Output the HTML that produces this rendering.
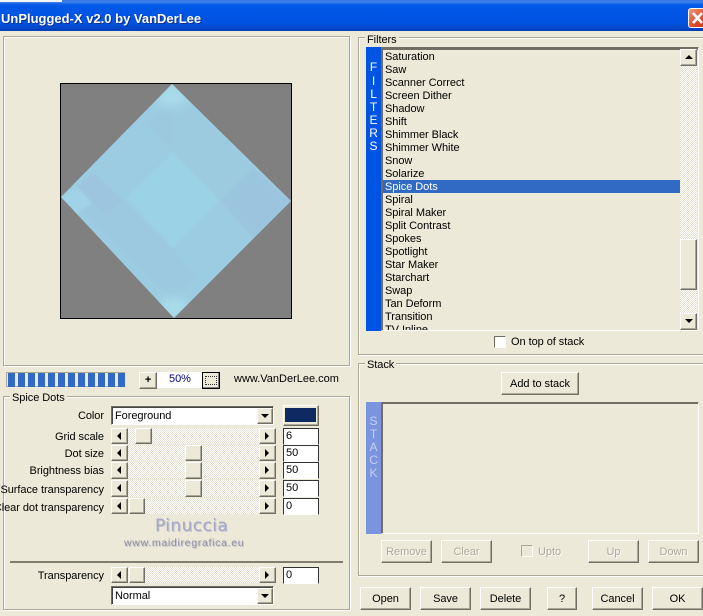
<!DOCTYPE html>
<html><head><meta charset="utf-8"><style>
html,body{margin:0;padding:0;background:#ece9d8}
#r{position:relative;width:703px;height:616px;overflow:hidden;background:#ece9d8;font-family:"Liberation Sans",sans-serif;font-size:11px;letter-spacing:-.05px;color:#000}
#r div{position:absolute;box-sizing:border-box;white-space:nowrap}
.t{line-height:13px}
.g{border:1px solid #aca899;box-shadow:inset 1px 1px 0 #fff,1px 1px 0 #fff}
.l{background:#ece9d8;padding:0 2px;height:13px;line-height:13px}
.b{background:#ece9d8;border:1px solid;border-color:#fff #716f64 #716f64 #fff;box-shadow:inset -1px -1px 0 #aca899;text-align:center}
.d{color:#aca899;text-shadow:1px 1px 0 #fff}
.tr{background:repeating-conic-gradient(#fff 0 25%,#e4e1d0 0 50%) 0 0/2px 2px}
.e{background:#fff;border:1px solid;border-color:#333 #333 #fff #333;box-shadow:inset 0 -1px 0 #fff;line-height:15px;padding-left:2px}
.c{background:#fff;border:1px solid;border-color:#716f64 #fff #fff #716f64;box-shadow:inset 1px 1px 0 #444;line-height:19px;padding-left:3px}
.rt{text-align:right;width:120px;line-height:13px}
.al,.ar,.au,.ad{width:0;height:0;border-style:solid;border-color:transparent}
.al{border-width:4px 4px 4px 0;border-right-color:#000}
.ar{border-width:4px 0 4px 4px;border-left-color:#000}
.au{border-width:0 4px 4px 4px;border-bottom-color:#000}
.ad{border-width:4px 4px 0 4px;border-top-color:#000}
.cell{background:#316ac5;width:7px;height:14px;top:373px}
.v{color:#fff;width:15px;text-align:center;font-size:12px;line-height:13px}
</style></head><body><div id="r">

<!-- top strip + titlebar -->
<div style="left:0;top:0;width:703px;height:3px;background:#3a7be8"></div>
<div style="left:0;top:0;width:62px;height:2px;background:#f4f4f4"></div>
<div style="left:0;top:3px;width:703px;height:28px;background:linear-gradient(#1f6ff0 0,#0058e6 8%,#0055e5 40%,#0054e3 70%,#0046c8 90%,#003fb8 100%)"></div>
<div style="left:1px;top:11px;font-weight:bold;font-size:13px;letter-spacing:0;line-height:16px;color:#fff;text-shadow:1px 1px 0 #0f2f90">UnPlugged-X v2.0 by VanDerLee</div>
<div style="left:688px;top:8px;width:20px;height:20px;background:linear-gradient(135deg,#f09a7c,#d8482a 60%,#c43a1a);border:1px solid #fff;border-radius:3px"></div>
<svg style="position:absolute;left:688px;top:8px" width="15" height="20"><path d="M5 5L14 15M14 5L5 15" stroke="#fff" stroke-width="2.6"/></svg>

<!-- left preview frame -->
<div class="g" style="left:3px;top:36px;width:347px;height:330px"></div>
<div style="left:60px;top:83px;width:232px;height:236px;background:#808080;border:1px solid #000"></div>
<svg style="position:absolute;left:0;top:0" width="360" height="330">
<defs>
<clipPath id="dm"><polygon points="172,84 291,201 174,318 61,197"/></clipPath>
<filter id="bl"><feGaussianBlur stdDeviation="1"/></filter>
<filter id="bl2"><feGaussianBlur stdDeviation="5"/></filter>
</defs>
<polygon points="172,84 291,201 174,318 61,197" fill="#9ccce2"/>
<g clip-path="url(#dm)">
<g filter="url(#bl)">
<polygon points="147,125 173,100 198,125 173,153" fill="#9cc9df"/>
<polygon points="93,172 173,248 147,275 67,197" fill="#9cc9e0"/>
<polygon points="220,201 253,168 173,90 173,153" fill="#9ccbe0"/>
<polygon points="173,153 220,201 173,248 127,198" fill="#9cd2e6"/>
<polygon points="253,168 290,201 253,238 220,201" fill="#9bc5de"/>
<polygon points="93,172 123,200 107,217 77,187" fill="#9dc5df"/>
<polygon points="173,248 198,277 173,298 147,275" fill="#9cc9df"/>
</g>
<g filter="url(#bl2)">
<polygon points="172,80 190,100 172,108 154,100" fill="#a9dcea"/>
<polygon points="174,322 192,304 174,296 156,304" fill="#a9dcea"/>
</g>
<polygon points="61,197 77,187 92,203 76,214" fill="#a0d2e8" filter="url(#bl)"/>
</g>
</svg>

<!-- progress -->
<div style="left:6px;top:372px;width:119px;height:15px;background:#ece9d8;border:1px solid #aca899"></div>
<div class="cell" style="left:8px"></div><div class="cell" style="left:18px"></div><div class="cell" style="left:28px"></div><div class="cell" style="left:38px"></div><div class="cell" style="left:48px"></div><div class="cell" style="left:58px"></div><div class="cell" style="left:68px"></div><div class="cell" style="left:78px"></div><div class="cell" style="left:88px"></div><div class="cell" style="left:98px"></div><div class="cell" style="left:108px"></div><div class="cell" style="left:118px"></div>
<div style="left:157px;top:372px;width:45px;height:16px;background:#fff"></div>
<div class="b" style="left:139px;top:372px;width:18px;height:17px;font-weight:bold;line-height:14px">+</div>
<div style="left:169px;top:373px;color:#000080;line-height:13px">50%</div>
<div style="left:202px;top:372px;width:18px;height:17px;background:#ece9d8;border:1px solid #000;box-shadow:inset -1px -1px 0 #808080"></div>
<div style="left:205px;top:376px;width:12px;height:9px;border:1px dotted #333"></div>
<div style="left:234px;top:373px;letter-spacing:0;line-height:13px">www.VanDerLee.com</div>

<!-- Spice Dots group -->
<div class="g" style="left:3px;top:396px;width:347px;height:214px"></div>
<div class="l" style="left:10px;top:392px">Spice Dots</div>
<div class="rt" style="left:-16px;top:410px">Color</div>
<div class="c" style="left:111px;top:406px;width:163px;height:19px">Foreground</div>
<div class="b" style="left:257px;top:408px;width:16px;height:16px"></div><div class="ad" style="left:261px;top:414px"></div>
<div class="b" style="left:283px;top:405px;width:36px;height:21px"></div>
<div style="left:285px;top:408px;width:31px;height:14px;background:#0f2a62"></div>

<!-- scroll rows -->
<div class="tr" style="left:128px;top:428px;width:131px;height:16px"></div>
<div class="tr" style="left:128px;top:445px;width:131px;height:16px"></div>
<div class="tr" style="left:128px;top:462px;width:131px;height:17px"></div>
<div class="tr" style="left:128px;top:480px;width:131px;height:17px"></div>
<div class="tr" style="left:128px;top:498px;width:131px;height:16px"></div>
<div class="tr" style="left:128px;top:567px;width:131px;height:16px"></div>

<div class="rt" style="left:-16px;top:431px">Grid scale</div>
<div class="b" style="left:111px;top:428px;width:17px;height:16px"></div><div class="al" style="left:117px;top:432px"></div>
<div class="b" style="left:135px;top:428px;width:17px;height:16px"></div>
<div class="b" style="left:259px;top:428px;width:17px;height:16px"></div><div class="ar" style="left:265px;top:432px"></div>
<div class="e" style="left:283px;top:428px;width:36px;height:17px">6</div>

<div class="rt" style="left:-16px;top:448px">Dot size</div>
<div class="b" style="left:111px;top:445px;width:17px;height:16px"></div><div class="al" style="left:117px;top:449px"></div>
<div class="b" style="left:185px;top:445px;width:17px;height:16px"></div>
<div class="b" style="left:259px;top:445px;width:17px;height:16px"></div><div class="ar" style="left:265px;top:449px"></div>
<div class="e" style="left:283px;top:445px;width:36px;height:17px">50</div>

<div class="rt" style="left:-16px;top:465px">Brightness bias</div>
<div class="b" style="left:111px;top:462px;width:17px;height:17px"></div><div class="al" style="left:117px;top:466px"></div>
<div class="b" style="left:185px;top:462px;width:17px;height:17px"></div>
<div class="b" style="left:259px;top:462px;width:17px;height:17px"></div><div class="ar" style="left:265px;top:466px"></div>
<div class="e" style="left:283px;top:462px;width:36px;height:17px">50</div>

<div class="rt" style="left:-16px;top:484px">Surface transparency</div>
<div class="b" style="left:111px;top:480px;width:17px;height:17px"></div><div class="al" style="left:117px;top:484px"></div>
<div class="b" style="left:185px;top:480px;width:17px;height:17px"></div>
<div class="b" style="left:259px;top:480px;width:17px;height:17px"></div><div class="ar" style="left:265px;top:484px"></div>
<div class="e" style="left:283px;top:480px;width:36px;height:17px">50</div>

<div class="rt" style="left:-16px;top:502px">Clear dot transparency</div>
<div class="b" style="left:111px;top:498px;width:17px;height:16px"></div><div class="al" style="left:117px;top:502px"></div>
<div class="b" style="left:129px;top:498px;width:16px;height:16px"></div>
<div class="b" style="left:259px;top:498px;width:17px;height:16px"></div><div class="ar" style="left:265px;top:502px"></div>
<div class="e" style="left:283px;top:498px;width:36px;height:17px">0</div>

<div style="left:155px;top:516px;font-size:17px;line-height:20px;color:#a4a8c8;letter-spacing:.4px;font-family:'DejaVu Sans',sans-serif;text-shadow:1px 1px 0 #c4c4cc">Pinuccia</div>
<div style="left:124px;top:537px;font-size:10.5px;letter-spacing:.7px;line-height:12px;color:#8f90a0;text-shadow:1px 1px 0 #c4c4cc">www.maidiregrafica.eu</div>

<div style="left:10px;top:561px;width:333px;height:2px;background:#807d6e"></div>
<div class="rt" style="left:-16px;top:570px">Transparency</div>
<div class="b" style="left:111px;top:567px;width:17px;height:16px"></div><div class="al" style="left:117px;top:571px"></div>
<div class="b" style="left:129px;top:567px;width:16px;height:16px"></div>
<div class="b" style="left:259px;top:567px;width:17px;height:16px"></div><div class="ar" style="left:265px;top:571px"></div>
<div class="e" style="left:283px;top:567px;width:36px;height:17px">0</div>
<div class="c" style="left:111px;top:586px;width:163px;height:19px">Normal</div>
<div class="b" style="left:257px;top:588px;width:16px;height:16px"></div><div class="ad" style="left:261px;top:594px"></div>

<!-- Filters group -->
<div class="g" style="left:358px;top:37px;width:350px;height:318px"></div>
<div class="l" style="left:365px;top:34px">Filters</div>
<div style="left:366px;top:47px;width:15px;height:284px;background:#0054e3"></div>
<div class="v" style="left:366px;top:61px">F</div><div class="v" style="left:366px;top:75px">I</div><div class="v" style="left:366px;top:88px">L</div><div class="v" style="left:366px;top:101px">T</div><div class="v" style="left:366px;top:114px">E</div><div class="v" style="left:366px;top:127px">R</div><div class="v" style="left:366px;top:140px">S</div>
<div style="left:381px;top:47px;width:318px;height:284px;overflow:hidden;border:1px solid;border-color:#716f64 #fff #fff #716f64;box-shadow:inset 1px 1px 0 #716f64">
<div style="left:1px;top:132px;width:297px;height:13px;background:#316ac5"></div>
<div class="t" style="left:3px;top:3px;line-height:13px">Saturation<br>Saw<br>Scanner Correct<br>Screen Dither<br>Shadow<br>Shift<br>Shimmer Black<br>Shimmer White<br>Snow<br>Solarize<br><span style="color:#fff">Spice Dots</span><br>Spiral<br>Spiral Maker<br>Split Contrast<br>Spokes<br>Spotlight<br>Star Maker<br>Starchart<br>Swap<br>Tan Deform<br>Transition<br>TV Inline</div>
<div style="left:1px;top:1px;width:316px;height:1px;background:#716f64"></div>
</div>
<div class="tr" style="left:680px;top:49px;width:17px;height:280px"></div>
<div class="b" style="left:680px;top:49px;width:17px;height:17px"></div><div class="au" style="left:685px;top:55px"></div>
<div class="b" style="left:680px;top:239px;width:17px;height:51px"></div>
<div class="b" style="left:680px;top:313px;width:17px;height:17px"></div><div class="ad" style="left:685px;top:319px"></div>
<div style="left:494px;top:336px;width:12px;height:12px;background:#fff;border:1px solid;border-color:#716f64 #fff #fff #716f64"></div>
<div style="left:511px;top:336px;line-height:13px">On top of stack</div>

<!-- Stack group -->
<div class="g" style="left:358px;top:363px;width:350px;height:213px"></div>
<div class="l" style="left:365px;top:359px">Stack</div>
<div class="b" style="left:501px;top:372px;width:78px;height:23px;line-height:22px">Add to stack</div>
<div style="left:366px;top:402px;width:15px;height:132px;background:#7b94e0"></div>
<div class="v" style="left:366px;top:415px;color:#c8d0ec">S</div><div class="v" style="left:366px;top:428px;color:#c8d0ec">T</div><div class="v" style="left:366px;top:441px;color:#c8d0ec">A</div><div class="v" style="left:366px;top:454px;color:#c8d0ec">C</div><div class="v" style="left:366px;top:467px;color:#c8d0ec">K</div>
<div style="left:381px;top:402px;width:318px;height:132px;border:1px solid;border-color:#716f64 #fff #fff #716f64;box-shadow:inset 1px 1px 0 #716f64"></div>

<div class="b d" style="left:381px;top:540px;width:51px;height:23px;line-height:22px">Remove</div>
<div class="b d" style="left:441px;top:540px;width:51px;height:23px;line-height:22px">Clear</div>
<div style="left:521px;top:545px;width:12px;height:12px;border:1px solid;border-color:#aca899 #fff #fff #aca899"></div>
<div class="d" style="left:538px;top:546px;line-height:13px">Upto</div>
<div class="b d" style="left:588px;top:540px;width:51px;height:23px;line-height:22px">Up</div>
<div class="b d" style="left:648px;top:540px;width:51px;height:23px;line-height:22px">Down</div>

<div class="b" style="left:360px;top:587px;width:51px;height:23px;line-height:22px">Open</div>
<div class="b" style="left:420px;top:587px;width:51px;height:23px;line-height:22px">Save</div>
<div class="b" style="left:480px;top:587px;width:51px;height:23px;line-height:22px">Delete</div>
<div class="b" style="left:547px;top:587px;width:30px;height:23px;line-height:22px">?</div>
<div class="b" style="left:592px;top:587px;width:51px;height:23px;line-height:22px">Cancel</div>
<div class="b" style="left:652px;top:587px;width:51px;height:23px;line-height:22px">OK</div>

</div></body></html>
